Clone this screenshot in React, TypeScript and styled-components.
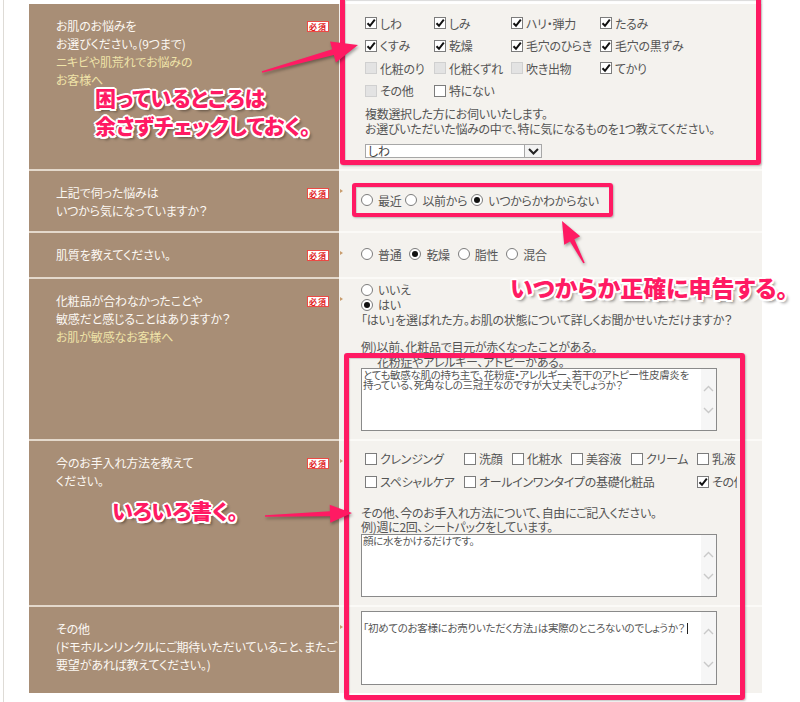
import React from "react";
import styled, { createGlobalStyle } from "styled-components";

const PINK = "#ff1a63";
const BROWN = "#a88e76";
const PANEL = "#f4f2ee";

const GlobalStyle = createGlobalStyle`
  html, body { margin: 0; padding: 0; background: #fff; }
  body {
    font-family: "Noto Sans CJK JP", "Noto Sans", sans-serif;
    font-feature-settings: "palt";
  }
  * { box-sizing: border-box; }
`;

const Page = styled.div`
  position: relative;
  width: 800px;
  height: 702px;
  overflow: hidden;
`;

const Frame = styled.div`
  margin-left: 3px;
  height: 702px;
  border-left: 1px solid #dedbd6;
  padding: 4px 0 0 25px;
`;

const Form = styled.div`
  display: flex;
  flex-direction: column;
  width: 733px;
`;

const Row = styled.div<{ $h: number }>`
  display: grid;
  grid-template-columns: 310px 423px;
  height: ${(p) => p.$h}px;
`;

const Label = styled.div<{ $first?: boolean }>`
  position: relative;
  background: ${BROWN};
  border-top: ${(p) => (p.$first ? "0" : "2px solid #e4d9cc")};
  padding: 13px 10px 0 27px;
  display: flex;
  justify-content: space-between;
  align-items: flex-start;
  &::after {
    content: "";
    position: absolute;
    right: -4px;
    top: 18px;
    border-left: 3px solid #c99d6e;
    border-top: 2px solid transparent;
    border-bottom: 2px solid transparent;
  }
`;

const LabelText = styled.div`
  font-size: 12px;
  line-height: 18px;
  color: #fcf8f3;
  white-space: nowrap;
  letter-spacing: -0.15px;
`;

const Hint = styled.span`
  display: block;
  color: #efe3a8;
`;

const Badge = styled.span`
  margin-top: 4px;
  width: 22px;
  height: 11px;
  border: 1px solid #ec4b45;
  background: #fff;
  color: #e0201c;
  font-size: 8px;
  line-height: 9px;
  font-weight: 700;
  text-align: center;
  letter-spacing: 1px;
  flex: none;
`;

const Field = styled.div<{ $first?: boolean; $pt: number }>`
  background: ${PANEL};
  border-top: ${(p) => (p.$first ? "0" : "2px solid #fbfaf7")};
  padding: ${(p) => p.$pt}px 0 0 22px;
  color: #555;
  font-size: 12px;
  letter-spacing: -0.3px;
  overflow: hidden;
`;

const CheckGrid = styled.div<{ $cols: string; $rowH: number; $w?: number }>`
  margin-left: 4px;
  display: grid;
  grid-template-columns: ${(p) => p.$cols};
  grid-auto-rows: ${(p) => p.$rowH}px;
  align-items: center;
  width: ${(p) => (p.$w ? `${p.$w}px` : "auto")};
  overflow: hidden;
`;

const Item = styled.label<{ $gap: number; $span?: number; $col?: number }>`
  display: inline-flex;
  align-items: center;
  gap: ${(p) => p.$gap}px;
  white-space: nowrap;
  color: #555;
  font-size: 12px;
  line-height: 15px;
  grid-column: ${(p) => (p.$col ? `${p.$col} / span ${p.$span ?? 1}` : "auto")};
`;

const Box = styled.span<{ $disabled?: boolean }>`
  width: 12px;
  height: 12px;
  flex: none;
  border: 1px solid ${(p) => (p.$disabled ? "#d0d0d0" : "#7c7c7c")};
  background: ${(p) => (p.$disabled ? "#e3e3e3" : "#fff")};
  display: inline-flex;
  align-items: center;
  justify-content: center;
`;

const Round = styled.span`
  width: 12px;
  height: 12px;
  flex: none;
  border: 1px solid #7c7c7c;
  border-radius: 50%;
  background: #fff;
  display: inline-flex;
  align-items: center;
  justify-content: center;
`;

const Dot = styled.span`
  width: 6px;
  height: 6px;
  border-radius: 50%;
  background: #111;
`;

const Check: React.FC<{ label: string; checked?: boolean; disabled?: boolean; col?: number; span?: number }> = ({
  label,
  checked,
  disabled,
  col,
  span,
}) => (
  <Item $gap={3} $col={col} $span={span}>
    <Box $disabled={disabled}>
      {checked && (
        <svg width="10" height="10" viewBox="0 0 10 10">
          <path d="M1.5 5.2 L4 7.8 L8.8 1.6" fill="none" stroke="#111" strokeWidth="2" />
        </svg>
      )}
    </Box>
    {label}
  </Item>
);

const Radio: React.FC<{ label: string; checked?: boolean }> = ({ label, checked }) => (
  <Item $gap={5}>
    <Round>{checked && <Dot />}</Round>
    {label}
  </Item>
);

const RadioRow = styled.div<{ $gap: number }>`
  display: flex;
  align-items: center;
  gap: ${(p) => p.$gap}px;
  height: 18px;
`;

const Stack = styled.div`
  display: flex;
  flex-direction: column;
  align-items: flex-start;
`;

const Line = styled.div<{ $mt?: number; $indent?: number; $lh?: number }>`
  font-size: 12px;
  line-height: ${(p) => p.$lh ?? 15}px;
  margin-top: ${(p) => p.$mt ?? 0}px;
  padding-left: ${(p) => p.$indent ?? 0}px;
  white-space: nowrap;
  color: #555;
`;

const Note = styled.div`
  margin: 4px 0 0 4px;
  font-size: 12px;
  line-height: 15px;
  color: #555;
  white-space: nowrap;
`;

const Select = styled.div`
  margin: 8px 0 0 4px;
  width: 177px;
  height: 14px;
  border: 1px solid #a7a7a7;
  background: #fff;
  display: flex;
  font-size: 12px;
  line-height: 12px;
  color: #444;
`;

const SelectValue = styled.span`
  flex: 1;
  padding-left: 2px;
`;

const SelectButton = styled.span`
  width: 17px;
  border-left: 1px solid #a7a7a7;
  background: #f3f3f3;
  display: flex;
  align-items: center;
  justify-content: center;
`;

const TextBox = styled.div<{ $h: number; $mt?: number }>`
  display: flex;
  width: 356px;
  height: ${(p) => p.$h}px;
  margin-top: ${(p) => p.$mt ?? 0}px;
  border: 1px solid #8a8a8a;
  background: #fff;
`;

const TextContent = styled.div<{ $pt: number }>`
  flex: 1;
  padding: ${(p) => p.$pt}px 0 0 1px;
  font-size: 10.5px;
  line-height: 10px;
  letter-spacing: -0.3px;
  color: #555;
  white-space: pre;
  overflow: hidden;
`;

const ScrollBar = styled.div`
  width: 15px;
  background: #f6f6f6;
  display: flex;
  flex-direction: column;
  justify-content: space-between;
  align-items: center;
  padding: 16px 0;
`;

const Chevron: React.FC<{ up?: boolean; color?: string; w?: number }> = ({ up, color = "#c9c9c9", w = 1.4 }) => (
  <svg width="11" height="7" viewBox="0 0 11 7">
    <path d={up ? "M1 6 L5.5 1.5 L10 6" : "M1 1 L5.5 5.5 L10 1"} fill="none" stroke={color} strokeWidth={w} />
  </svg>
);

const TextArea: React.FC<{ h: number; pt: number; mt?: number; text: string }> = ({ h, pt, mt, text }) => (
  <TextBox $h={h} $mt={mt}>
    <TextContent $pt={pt}>{text}</TextContent>
    <ScrollBar>
      <Chevron up />
      <Chevron />
    </ScrollBar>
  </TextBox>
);

const Caret = styled.span`
  display: inline-block;
  width: 1px;
  height: 11px;
  margin-left: 2px;
  background: #222;
  vertical-align: -2px;
`;

/* ---------- annotations ---------- */

const Frame2 = styled.div<{ $x: number; $y: number; $w: number; $h: number; $b: number }>`
  position: absolute;
  left: ${(p) => p.$x}px;
  top: ${(p) => p.$y}px;
  width: ${(p) => p.$w}px;
  height: ${(p) => p.$h}px;
  border: ${(p) => p.$b}px solid ${PINK};
  border-radius: 3px;
  box-shadow: 1px 1px 2px rgba(0, 0, 0, 0.25), inset 1px 1px 1px rgba(0, 0, 0, 0.15);
  pointer-events: none;
`;

const Callout = styled.div<{ $x: number; $y: number; $size: number }>`
  position: absolute;
  left: ${(p) => p.$x}px;
  top: ${(p) => p.$y}px;
  font-size: ${(p) => p.$size}px;
  line-height: 28px;
  font-weight: 900;
  color: ${PINK};
  white-space: nowrap;
  text-shadow: 2px 0 0 #fff, -2px 0 0 #fff, 0 2px 0 #fff, 0 -2px 0 #fff, 1.5px 1.5px 0 #fff,
    -1.5px -1.5px 0 #fff, 1.5px -1.5px 0 #fff, -1.5px 1.5px 0 #fff, 3px 3px 3px rgba(0, 0, 0, 0.45);
`;

const ArrowLayer = styled.svg`
  position: absolute;
  left: 0;
  top: 0;
  pointer-events: none;
  filter: drop-shadow(1px 2px 1.5px rgba(0, 0, 0, 0.35));
`;

function arrowPoints(
  x1: number,
  y1: number,
  x2: number,
  y2: number,
  tailW: number,
  shaftW: number,
  headW: number,
  headL: number
) {
  const dx = x2 - x1;
  const dy = y2 - y1;
  const len = Math.hypot(dx, dy);
  const ux = dx / len;
  const uy = dy / len;
  const nx = -uy;
  const ny = ux;
  const bx = x2 - ux * headL;
  const by = y2 - uy * headL;
  const pts = [
    [x1 + (nx * tailW) / 2, y1 + (ny * tailW) / 2],
    [bx + (nx * shaftW) / 2, by + (ny * shaftW) / 2],
    [bx + (nx * headW) / 2, by + (ny * headW) / 2],
    [x2, y2],
    [bx - (nx * headW) / 2, by - (ny * headW) / 2],
    [bx - (nx * shaftW) / 2, by - (ny * shaftW) / 2],
    [x1 - (nx * tailW) / 2, y1 - (ny * tailW) / 2],
  ];
  return pts.map((p) => `${p[0].toFixed(1)},${p[1].toFixed(1)}`).join(" ");
}

export default function App() {
  return (
    <Page>
      <GlobalStyle />
      <Frame>
        <Form>
          <Row $h={165}>
            <Label $first>
              <LabelText>
                お肌のお悩みを
                <br />
                お選びください。(9つまで)
                <Hint>ニキビや肌荒れでお悩みの</Hint>
                <Hint>お客様へ</Hint>
              </LabelText>
              <Badge>必須</Badge>
            </Label>
            <Field $first $pt={8}>
              <CheckGrid $cols="69px 77px 89px auto" $rowH={22.5}>
                <Check label="しわ" checked />
                <Check label="しみ" checked />
                <Check label="ハリ・弾力" checked />
                <Check label="たるみ" checked />
                <Check label="くすみ" checked />
                <Check label="乾燥" checked />
                <Check label="毛穴のひらき" checked />
                <Check label="毛穴の黒ずみ" checked />
                <Check label="化粧のり" disabled />
                <Check label="化粧くずれ" disabled />
                <Check label="吹き出物" disabled />
                <Check label="てかり" checked />
                <Check label="その他" disabled />
                <Check label="特にない" />
              </CheckGrid>
              <Note>
                複数選択した方にお伺いいたします。
                <br />
                お選びいただいた悩みの中で、特に気になるものを1つ教えてください。
              </Note>
              <Select>
                <SelectValue>しわ</SelectValue>
                <SelectButton>
                  <Chevron color="#222" w={2} />
                </SelectButton>
              </Select>
            </Field>
          </Row>

          <Row $h={62}>
            <Label>
              <LabelText>
                上記で伺った悩みは
                <br />
                いつから気になっていますか？
              </LabelText>
              <Badge>必須</Badge>
            </Label>
            <Field $pt={20}>
              <RadioRow $gap={4}>
                <Radio label="最近" />
                <Radio label="以前から" />
                <Radio label="いつからかわからない" checked />
              </RadioRow>
            </Field>
          </Row>

          <Row $h={46}>
            <Label>
              <LabelText>肌質を教えてください。</LabelText>
              <Badge>必須</Badge>
            </Label>
            <Field $pt={12}>
              <RadioRow $gap={8}>
                <Radio label="普通" />
                <Radio label="乾燥" checked />
                <Radio label="脂性" />
                <Radio label="混合" />
              </RadioRow>
            </Field>
          </Row>

          <Row $h={162}>
            <Label>
              <LabelText>
                化粧品が合わなかったことや
                <br />
                敏感だと感じることはありますか？
                <Hint>お肌が敏感なお客様へ</Hint>
              </LabelText>
              <Badge>必須</Badge>
            </Label>
            <Field $pt={3}>
              <Stack>
                <Radio label="いいえ" />
                <Radio label="はい" checked />
                <Line>「はい」を選ばれた方。お肌の状態について詳しくお聞かせいただけますか？</Line>
                <Line $mt={12}>例)以前、化粧品で目元が赤くなったことがある。</Line>
                <Line $indent={16}>花粉症やアレルギー、アトピーがある。</Line>
                <TextArea
                  h={63}
                  mt={-1}
                  pt={1}
                  text={
                    "とても敏感な肌の持ち主で、花粉症・アレルギー、若干のアトピー性皮膚炎を\n持っている、死角なしの三冠王なのですが大丈夫でしょうか？"
                  }
                />
              </Stack>
            </Field>
          </Row>

          <Row $h={166}>
            <Label>
              <LabelText>
                今のお手入れ方法を教えて
                <br />
                ください。
              </LabelText>
              <Badge>必須</Badge>
            </Label>
            <Field $pt={6}>
              <CheckGrid $cols="99px 48px 59px 60px 66px auto" $rowH={23} $w={372}>
                <Check label="クレンジング" />
                <Check label="洗顔" />
                <Check label="化粧水" />
                <Check label="美容液" />
                <Check label="クリーム" />
                <Check label="乳液" />
                <Check label="スペシャルケア" col={1} />
                <Check label="オールインワンタイプの基礎化粧品" col={2} span={4} />
                <Check label="その他" checked col={6} />
              </CheckGrid>
              <Line $mt={13} $lh={14}>
                その他、今のお手入れ方法について、自由にご記入ください。
              </Line>
              <Line $lh={14}>例)週に2回、シートパックをしています。</Line>
              <TextArea h={63} pt={1} text="顔に水をかけるだけです。" />
            </Field>
          </Row>

          <Row $h={88}>
            <Label>
              <LabelText>
                その他
                <br />
                (ドモホルンリンクルにご期待いただいていること、またご
                <br />
                要望があれば教えてください。)
              </LabelText>
            </Label>
            <Field $pt={4}>
              <TextBox $h={74}>
                <TextContent $pt={11}>
                  「初めてのお客様にお売りいただく方法」は実際のところないのでしょうか？
                  <Caret />
                </TextContent>
                <ScrollBar>
                  <Chevron up />
                  <Chevron />
                </ScrollBar>
              </TextBox>
            </Field>
          </Row>
        </Form>
      </Frame>

      <Frame2 $x={340} $y={-5} $w={421} $h={170} $b={5} />
      <Frame2 $x={352} $y={183} $w={261} $h={34} $b={4} />
      <Frame2 $x={344} $y={353} $w={401} $h={347} $b={5} />

      <ArrowLayer width="800" height="702" viewBox="0 0 800 702">
        <polygon points={arrowPoints(262, 72, 358, 45, 1.5, 6, 22, 26)} fill={PINK} />
        <polygon points={arrowPoints(584, 263, 562, 221, 1.5, 5, 18, 22)} fill={PINK} />
        <polygon points={arrowPoints(265, 516, 352, 513, 1.5, 5, 18, 22)} fill={PINK} />
      </ArrowLayer>

      <Callout $x={95} $y={83} $size={21}>
        困っているところは
        <br />
        余さずチェックしておく。
      </Callout>
      <Callout $x={510} $y={273} $size={23}>
        いつからか正確に申告する。
      </Callout>
      <Callout $x={112} $y={496} $size={21}>
        いろいろ書く。
      </Callout>
    </Page>
  );
}
